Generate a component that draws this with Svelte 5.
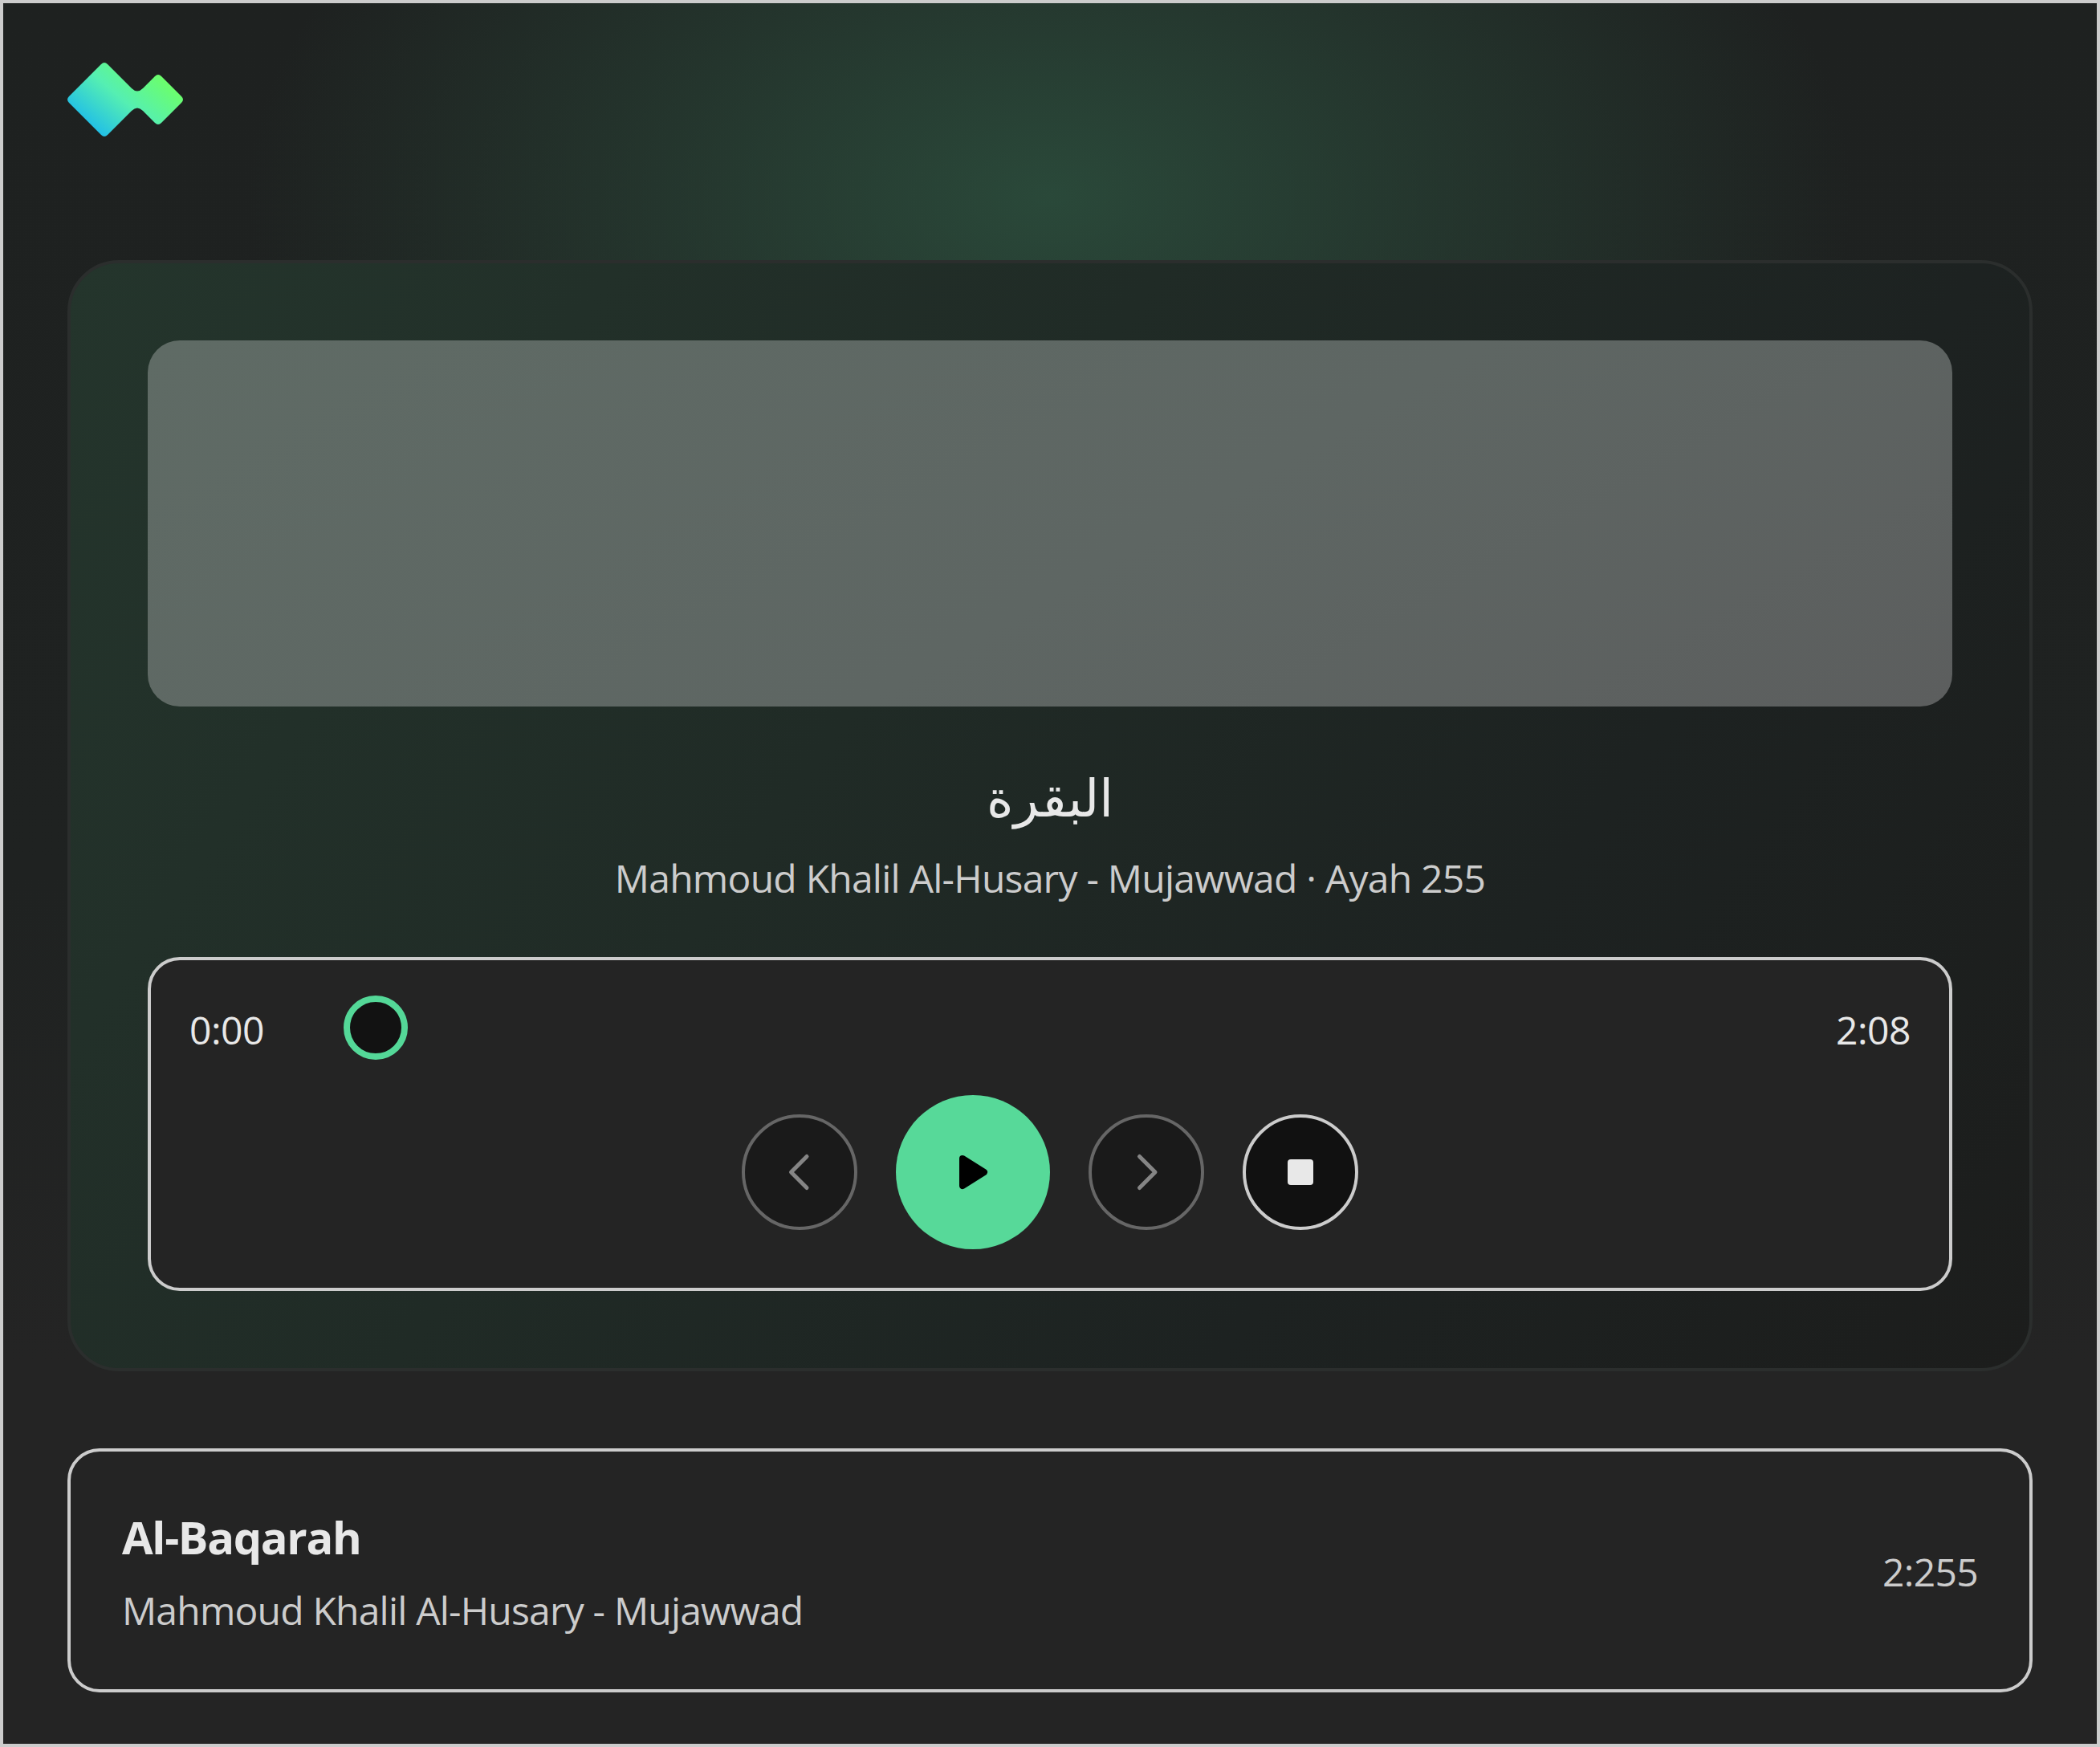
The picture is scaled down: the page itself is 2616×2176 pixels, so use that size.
<script lang="ts">
	const surah = 'البقرة';
	const reciter = 'Mahmoud Khalil Al-Husary - Mujawwad';
</script>

<div class="page">
	<header class="top">
		<svg class="logo" viewBox="0 0 144 92" width="144" height="92" aria-label="logo">
			<defs>
				<linearGradient id="logo-fill" gradientUnits="userSpaceOnUse" x1="42" y1="94" x2="112" y2="12">
					<stop offset="0" stop-color="#1fbde9" />
					<stop offset="0.5" stop-color="#55efb2" />
					<stop offset="1" stop-color="#6cff6a" />
				</linearGradient>
			</defs>
			<path
				fill="url(#logo-fill)"
				d="M2 42 L42 2 Q46 -2 50 2 L80 32 Q87 39 94 32 L109 17 Q113 13 117 17 L142 42 Q146 46 142 50 L117 75 Q113 79 109 75 L94 60 Q87 53 80 60 L50 90 Q46 94 42 90 L2 50 Q-2 46 2 42Z"
			/>
		</svg>
	</header>

	<section class="card">
		<div class="cover"></div>

		<h1 class="title" dir="rtl">{surah}</h1>
		<p class="subtitle">{reciter} · Ayah 255</p>

		<div class="player">
			<div class="timeline">
				<span class="time">0:00</span>
				<div class="slider"><span class="thumb"></span></div>
				<span class="time">2:08</span>
			</div>
			<div class="controls">
				<button class="btn" aria-label="Previous">
					<svg viewBox="0 0 48 48" width="48" height="48"><path class="chev" d="M33 4.5 L13.5 24 L33 43.5" /></svg>
				</button>
				<button class="btn play" aria-label="Play">
					<svg viewBox="0 0 48 48" width="48" height="48"><path class="tri" d="M11 7 L38 24 L11 41Z" /></svg>
				</button>
				<button class="btn" aria-label="Next">
					<svg viewBox="0 0 48 48" width="48" height="48"><path class="chev" d="M15.5 4.5 L35 24 L15.5 43.5" /></svg>
				</button>
				<button class="btn stop" aria-label="Stop"><span class="square"></span></button>
			</div>
		</div>
	</section>

	<section class="track">
		<div class="track-info">
			<div class="track-name">Al-Baqarah</div>
			<div class="track-reciter">{reciter}</div>
		</div>
		<span class="track-ref">2:255</span>
	</section>
</div>

<style>
	:global(body) {
		margin: 0;
		background: #242424;
	}

	.page {
		box-sizing: border-box;
		width: 2616px;
		height: 2176px;
		padding: 0 80px;
		border: 4px solid #cccccc;
		font-family: 'Open Sans', 'DejaVu Sans', sans-serif;
		color: #e8e8e8;
		background:
			radial-gradient(ellipse 1000px 600px at 50% 240px, rgba(46, 86, 66, 0.75), rgba(46, 86, 66, 0) 100%),
			linear-gradient(180deg, #1e2120 0%, #1f2221 50%, #242424 78%);
	}

	.top {
		height: 320px;
		padding-top: 74px;
		box-sizing: border-box;
	}

	.logo {
		display: block;
		overflow: visible;
	}

	.card {
		box-sizing: border-box;
		height: 1384px;
		padding: 96px;
		border: 4px solid #2b2e2d;
		border-radius: 64px;
		background: linear-gradient(125deg, #24352c 0%, #202b26 40%, #1d2221 70%, #1c1d1c 100%);
	}

	.cover {
		height: 456px;
		border-radius: 40px;
		background: linear-gradient(150deg, #5f6b65 0%, #5e6663 55%, #5c5e5e 100%);
	}

	.title {
		margin: 73px 0 0;
		font-size: 64px;
		font-weight: 400;
		line-height: 80px;
		text-align: center;
		color: #e8e8e8;
	}

	.subtitle {
		margin: 29px 0 0;
		font-size: 48px;
		line-height: 64px;
		letter-spacing: -0.76px;
		text-align: center;
		color: #cccccc;
	}

	.player {
		box-sizing: border-box;
		height: 416px;
		margin-top: 66px;
		padding: 44px 48px 48px;
		border: 4px solid #cccccc;
		border-radius: 40px;
		background: #242424;
	}

	.timeline {
		display: flex;
		align-items: center;
		height: 80px;
		gap: 40px;
	}

	.time {
		padding-top: 6px;
		font-size: 48px;
		line-height: 64px;
		letter-spacing: -0.5px;
		color: #e8e8e8;
	}

	.slider {
		flex: 1;
		display: flex;
		align-items: center;
		padding-left: 59px;
	}

	.thumb {
		box-sizing: border-box;
		width: 80px;
		height: 80px;
		border: 8px solid #54d898;
		border-radius: 50%;
		background: #121212;
	}

	.controls {
		display: flex;
		align-items: center;
		justify-content: center;
		gap: 48px;
		margin-top: 44px;
	}

	.btn {
		box-sizing: border-box;
		display: flex;
		align-items: center;
		justify-content: center;
		width: 144px;
		height: 144px;
		padding: 0;
		border: 4px solid #666666;
		border-radius: 50%;
		background: #1a1a1a;
	}

	.play {
		width: 192px;
		height: 192px;
		border: none;
		background: #57d999;
	}

	.stop {
		border-color: #cccccc;
		background: #111111;
	}

	.square {
		width: 32px;
		height: 32px;
		border-radius: 4px;
		background: #e8e8e8;
	}

	.chev {
		fill: none;
		stroke: #858585;
		stroke-width: 5;
		stroke-linecap: round;
		stroke-linejoin: round;
	}

	.tri {
		fill: #000;
		stroke: #000;
		stroke-width: 8;
		stroke-linejoin: round;
	}

	.track {
		box-sizing: border-box;
		display: flex;
		align-items: center;
		justify-content: space-between;
		height: 304px;
		margin-top: 96px;
		padding: 0 64px;
		border: 4px solid #cccccc;
		border-radius: 40px;
		background: #242424;
	}

	.track-info {
		padding-top: 4px;
	}

	.track-name {
		font-size: 56px;
		font-weight: 700;
		line-height: 72px;
		letter-spacing: -1.3px;
		color: #e8e8e8;
	}

	.track-reciter {
		margin-top: 24px;
		font-size: 48px;
		line-height: 64px;
		letter-spacing: -0.8px;
		color: #cccccc;
	}

	.track-ref {
		padding-top: 3px;
		font-size: 48px;
		letter-spacing: -0.7px;
		color: #cccccc;
	}
</style>
